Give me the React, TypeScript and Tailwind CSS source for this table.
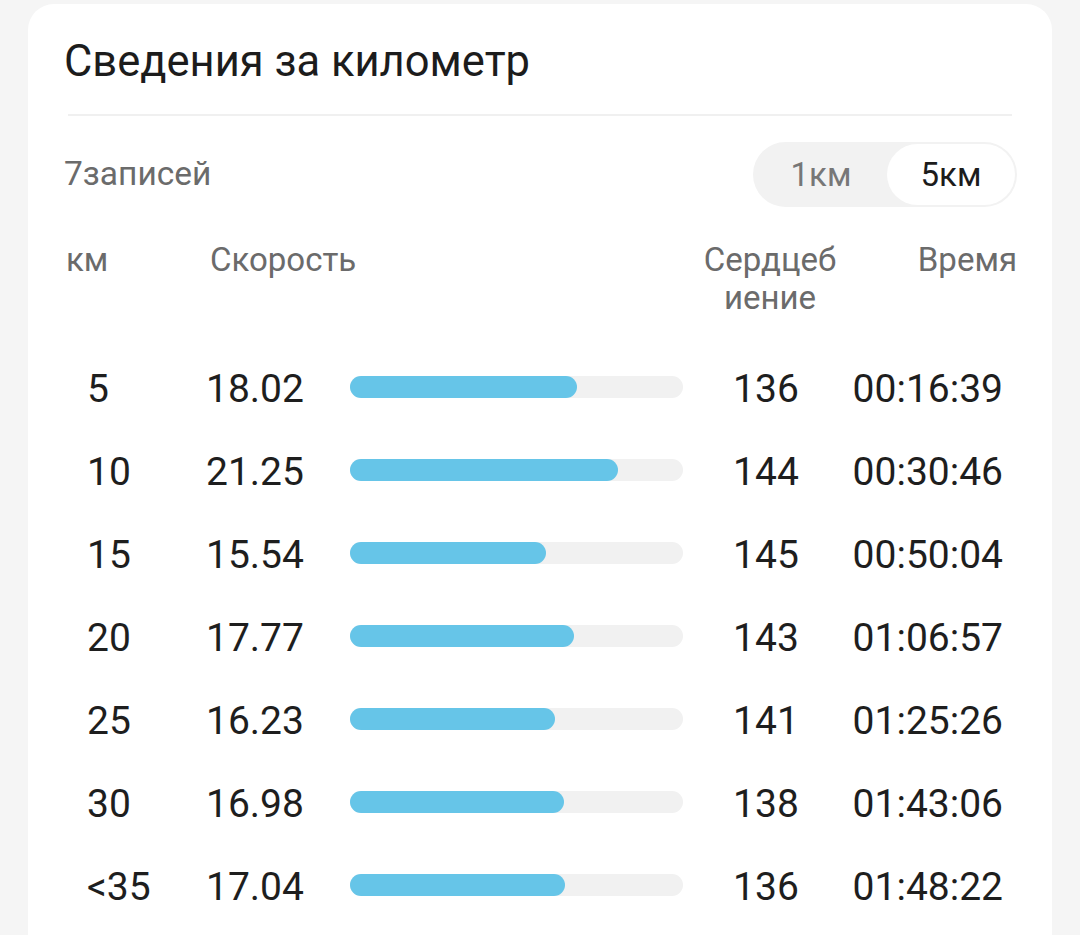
import React from "react";

const rows = [
  { km: "5", speed: "18.02", hr: "136", time: "00:16:39" },
  { km: "10", speed: "21.25", hr: "144", time: "00:30:46" },
  { km: "15", speed: "15.54", hr: "145", time: "00:50:04" },
  { km: "20", speed: "17.77", hr: "143", time: "01:06:57" },
  { km: "25", speed: "16.23", hr: "141", time: "01:25:26" },
  { km: "30", speed: "16.98", hr: "138", time: "01:43:06" },
  { km: "<35", speed: "17.04", hr: "136", time: "01:48:22" },
];

export default function App() {
  return (
    <div
      className="w-[1080px] h-[935px] overflow-hidden bg-[#f5f5f5] pt-[4px] px-[28px]"
      style={{ fontFamily: "Roboto, 'Noto Sans', sans-serif" }}
    >
      <div className="bg-white rounded-t-[26px] h-[960px] pt-[33px]">
        <h1 className="pl-[36px] text-[43.5px] leading-[50px] text-[#1c1c1c] font-normal">
          Сведения за километр
        </h1>
        <div className="mx-[40px] mt-[27px] h-[2px] bg-[#f0f0f0]" />
        <div className="flex items-center justify-between pl-[36px] pr-[35px] mt-[26px]">
          <span className="text-[33.5px] text-[#6b6b6b]">7записей</span>
          <div className="flex h-[65px] w-[264px] rounded-full bg-[#f2f2f2] p-[2px]">
            <div className="flex-1 flex items-center justify-center text-[33px] text-[#777777]">
              1км
            </div>
            <div className="w-[128px] flex items-center justify-center rounded-full bg-white text-[33px] text-[#1c1c1c]">
              5км
            </div>
          </div>
        </div>
        <div className="flex pl-[36px] mt-[34px] text-[33px] leading-[38px] text-[#6b6b6b]">
          <div className="w-[145px] pl-[2px]">км</div>
          <div className="w-[494px] pl-[1px]">Скорость</div>
          <div className="w-[134px] text-center">
            Сердцеб
            <br />
            иение
          </div>
          <div className="flex-1 text-right pr-[35px]">Время</div>
        </div>
        <div className="mt-[31px] pl-[36px]">
          {rows.map((r) => (
            <div
              key={r.km}
              className="flex items-center h-[83px] text-[39px] text-[#1e1e1e]"
            >
              <div className="w-[142px] pl-[23px]">{r.km}</div>
              <div className="w-[144px]">{r.speed}</div>
              <div className="w-[333px] h-[22px] rounded-full bg-[#f1f1f1] -mt-[5px]">
                <div
                  className="h-full rounded-full bg-[#66c5e8]"
                  style={{ width: `${(parseFloat(r.speed) / 26.4) * 333}px` }}
                />
              </div>
              <div className="w-[20px]" />
              <div className="w-[126px] text-center">{r.hr}</div>
              <div className="flex-1 text-right pr-[49px]">{r.time}</div>
            </div>
          ))}
        </div>
      </div>
    </div>
  );
}
